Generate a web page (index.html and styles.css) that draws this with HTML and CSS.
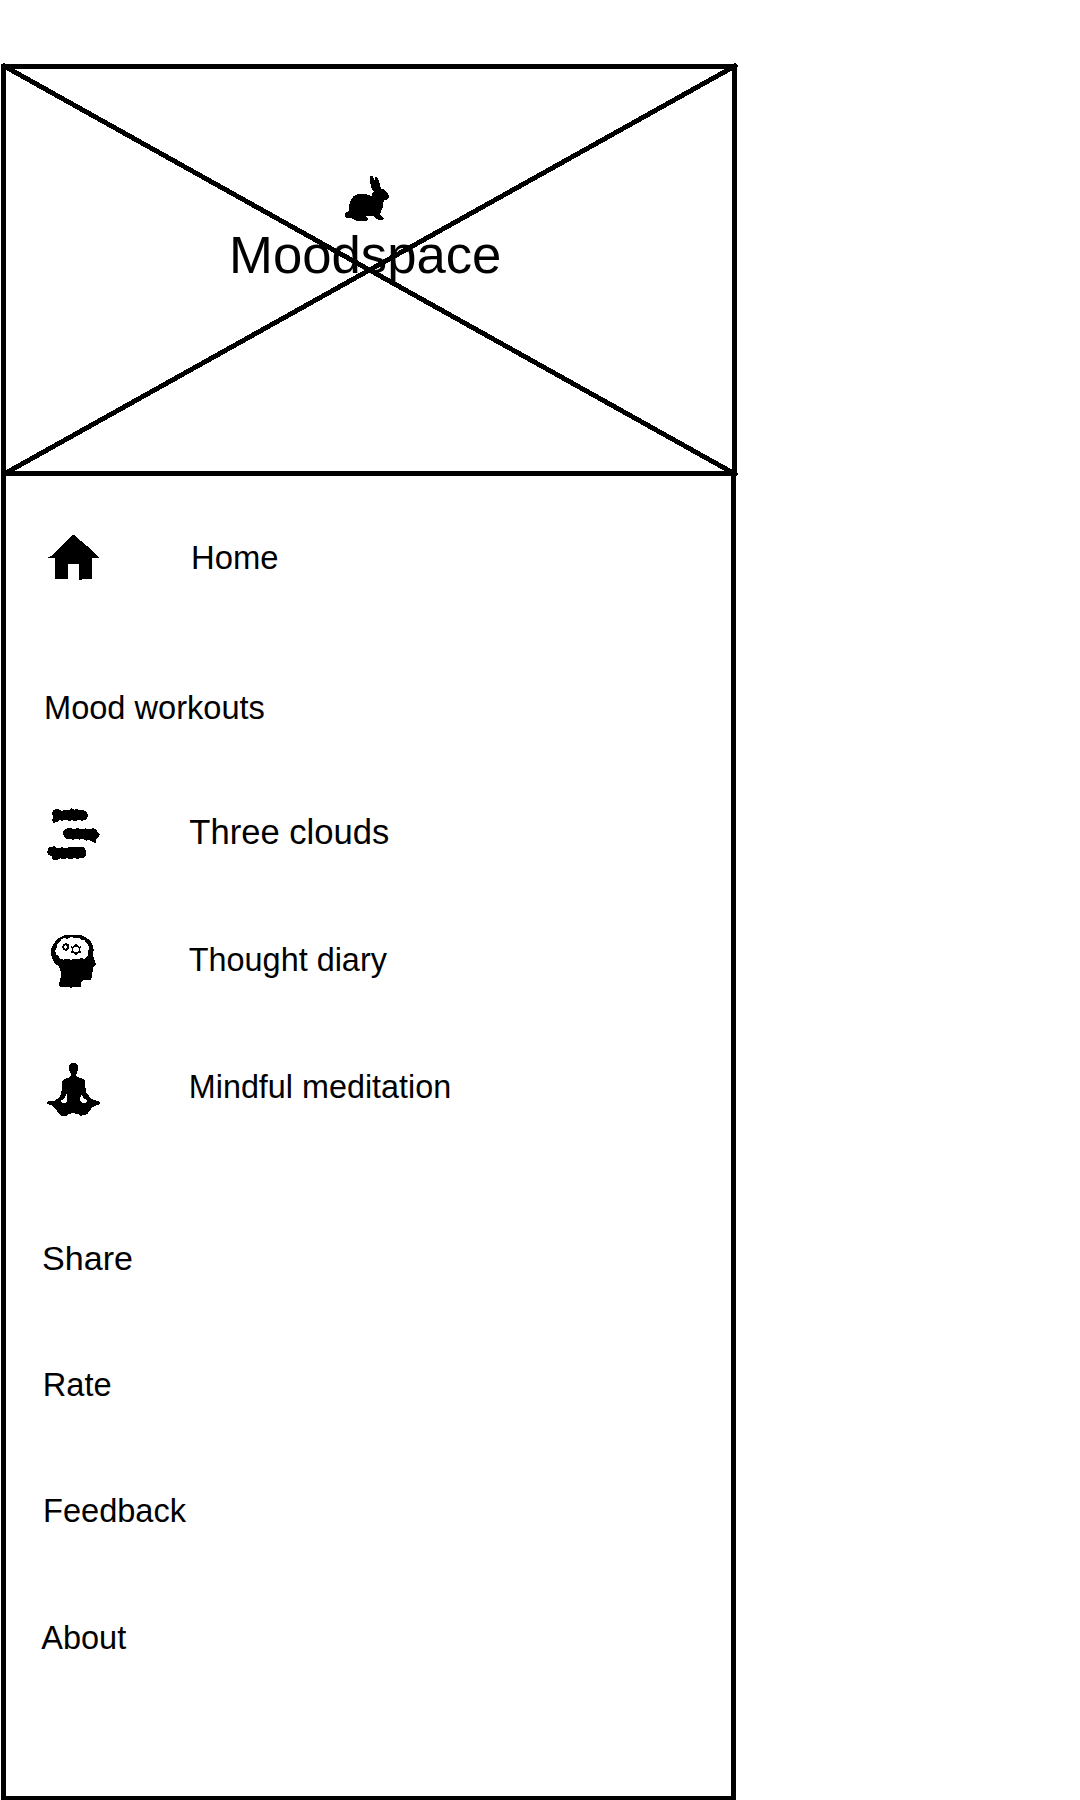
FILE: index.html
```
<!DOCTYPE html>
<html lang="en">
<head>
<meta charset="utf-8">
<title>Moodspace</title>
<link rel="stylesheet" href="styles.css">
</head>
<body>
<div class="drawer">
  <header class="banner">
    <svg class="cross" viewBox="0 0 737 414" aria-hidden="true"><path d="M3 3 734 411M734 3 3 411"/></svg>
    <svg class="rabbit" viewBox="0 0 210 195" aria-hidden="true"><path d="M105 32L112 33 118 43 120 48 120 36 126 36 132 46 136 65 138 71 148 74 156 82 162 92 161 98 157 103 147 107 145 114 144 127 138 139 135 149 141 154 146 160 143 166 130 165 119 156 114 152 94 154 99 160 97 168 68 168 58 164 48 158 33 158 29 151 32 142 41 139 42 122 46 108 55 94 70 87 89 86 103 91 109 94 111 85 117 80 108 67 106 55Z"/></svg>
    <h1 class="brand">Moodspace</h1>
  </header>
  <nav class="menu">
    <a class="row home"><svg class="icon" viewBox="0 0 240 228" aria-hidden="true"><path d="M114 44L119 45 154 78 157 79 192 111 192 114 171 114 171 177 141 177 141 180 132 180 132 132 98 132 98 177 60 177 60 114 39 114 39 111 47 109Z"/></svg><span class="label">Home</span></a>
    <h2 class="heading">Mood workouts</h2>
    <a class="row clouds"><svg class="icon" viewBox="0 -4 240 228" aria-hidden="true"><path d="M56 44L64 41 75 43 80 47 91 43 103 44 110 39 117 43 126 41 132 45 147 45 153 49 159 58 157 68 151 75 139 76 130 74 121 77 112 75 103 76 91 74 81 76 73 75 67 81 55 82 51 74 55 64 51 54Z"/><path d="M91 102L101 98 119 101 129 98 137 102 152 99 165 102 175 98 183 102 187 111 196 117 191 124 186 128 182 138 183 144 174 140 164 134 154 136 143 131 132 133 123 130 114 134 106 130 92 130 88 123 82 117 84 108Z"/><path d="M41 156L51 155 59 152 66 158 76 158 82 155 91 159 102 156 137 156 144 155 151 162 154 171 152 183 145 189 136 188 129 191 119 188 108 192 97 189 86 191 77 189 68 193 59 195 52 191 50 182 41 179 36 169 40 163Z"/></svg><span class="label">Three clouds</span></a>
    <a class="row diary"><svg class="icon" viewBox="0 7 240 228" aria-hidden="true"><path d="M75 54L88 47 107 45 135 45 153 53 166 64 174 77 176 91 174 108 182 132 182 137 175 142 175 154 171 158 171 174 166 181 146 181 138 188 138 203 112 203 108 207 104 203 76 202 71 197 77 174 77 155 73 142 57 128 52 116 47 101 49 85 56 72 66 59Z"/><path class="cut" d="M68 70L76 66 79 58 90 55 97 58 109 52 119 55 132 54 139 61 148 61 152 67 160 75 162 87 159 96 158 108 148 117 137 115 128 119 117 117 109 121 96 116 86 120 75 117 70 108 62 103 61 91 65 84Z"/><g class="gear"><circle cx="92" cy="82" r="7.5"/><path d="M92 71v4M92 89v4M81 82h4M99 82h4M84 74l3 3M100 74l-3 3M84 90l3-3M100 90l-3-3"/><circle cx="123" cy="90" r="11"/><path d="M123 72v7M123 101v6M108 81l7 4M138 81l-7 4M108 99l7-4M138 99l-7-4"/></g></svg><span class="label">Thought diary</span></a>
    <a class="row mindful"><svg class="icon" viewBox="0 -6 240 228" aria-hidden="true"><path fill-rule="evenodd" d="M108 37L117 35 124 38 129 45 129 56 125 65 124 74 130 79 145 84 151 91 151 109 154 126 168 142 176 148 188 149 195 154 194 160 184 162 170 171 164 180 157 189 151 192 137 194 126 188 111 187 101 190 95 194 80 194 71 187 61 173 51 162 38 160 36 153 42 150 58 149 74 139 79 124 82 107 81 91 86 85 101 80 107 74 107 67 103 59 102 45ZM95 129L88 143 78 149 82 156 94 155 97 144ZM139 130L135 142 137 154 148 156 157 153 155 147 147 142Z"/></svg><span class="label">Mindful meditation</span></a>
    <a class="link share">Share</a>
    <a class="link rate">Rate</a>
    <a class="link feedback">Feedback</a>
    <a class="link about">About</a>
  </nav>
</div>
</body>
</html>
```
FILE: styles.css
```
* { box-sizing: border-box; }

body {
  margin: 0;
  height: 1800px;
  overflow: hidden;
  background: #fff;
  color: #000;
  font-family: "Liberation Sans", Arial, sans-serif;
}

.drawer {
  display: flex;
  flex-direction: column;
  width: 737px;
  height: 1800px;
  padding: 64px 0 0 1px;
}

.banner {
  position: relative;
  display: flex;
  flex-direction: column;
  flex: none;
  height: 412px;
  padding: 96px 0 0 223px;
  border: 5px solid #000;
}

.cross {
  position: absolute;
  left: -5px;
  top: -6px;
  width: 737px;
  height: 414px;
  fill: none;
  stroke: #000;
  stroke-width: 4.9;
  stroke-linecap: square;
  shape-rendering: crispEdges;
}

.rabbit {
  flex: none;
  width: 70px;
  height: 65px;
  margin-left: 106px;
  shape-rendering: crispEdges;
}

.brand {
  margin: -5px 0 0;
  font-size: 52.7px;
  font-weight: 400;
  line-height: 60px;
}

.menu {
  display: flex;
  flex-direction: column;
  flex: 1;
  width: 735px;
  padding: 44px 0 0 29px;
  border: 5px solid #000;
  border-top: 0;
  border-bottom-width: 4px;
}

.row {
  display: flex;
  align-items: center;
  flex: none;
  height: 76px;
  font-size: 32.6px;
  line-height: 40px;
}

.icon {
  flex: none;
  width: 80px;
  height: 76px;
  shape-rendering: crispEdges;
}

.cut { fill: #fff; }
.gear { fill: none; stroke: #000; stroke-width: 5; }

.label { margin-left: 73.8px; white-space: nowrap; }

.home { font-size: 32.8px; }
.home .label { margin-left: 76px; }

.heading {
  margin: 92px 0 0 9px;
  font-size: 32.6px;
  font-weight: 400;
  line-height: 40px;
}

.clouds { margin-top: 66px; font-size: 34.6px; }
.clouds .label { margin-left: 74.3px; }
.diary { margin-top: 52px; font-size: 32.4px; }
.mindful { margin-top: 51px; font-size: 32.35px; }

.link { margin-top: 86px; font-size: 32.6px; line-height: 40px; }
.share { margin: 113px 0 0 7px; font-size: 34.1px; }
.rate { margin: 87px 0 0 7.8px; }
.feedback { margin-left: 8px; }
.about { margin: 87px 0 0 6.3px; font-size: 32.5px; }
```
